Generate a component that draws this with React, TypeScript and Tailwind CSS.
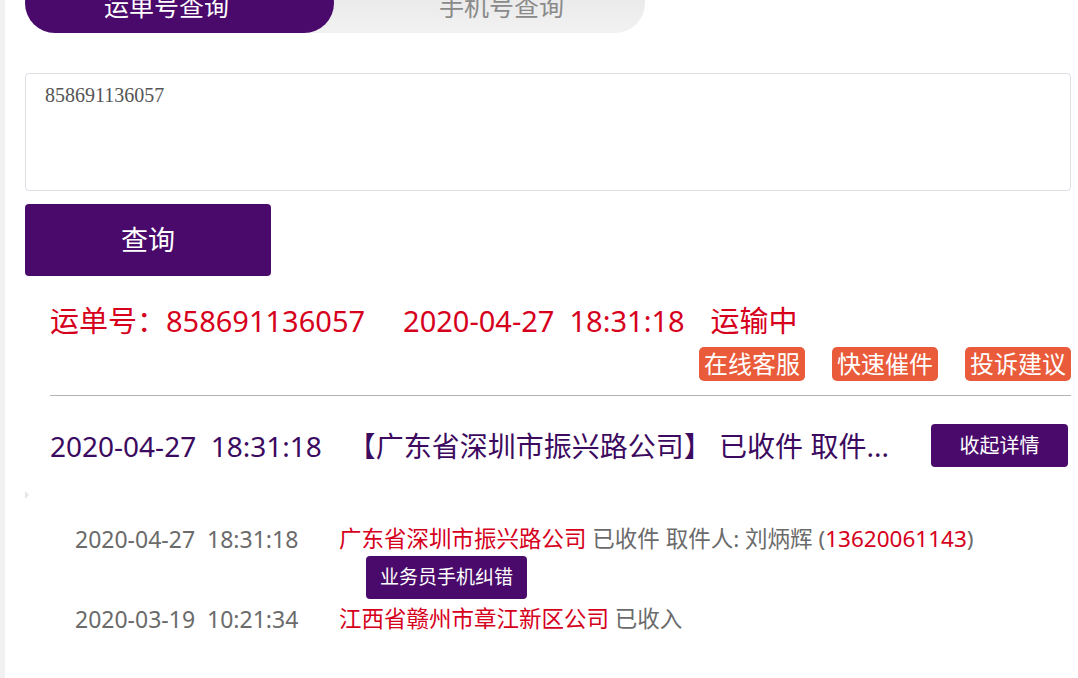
const FONT = "font-['Noto_Sans','Noto_Sans_CJK_SC',sans-serif]"

function ActionButton({ label }: { label: string }) {
  return (
    <button className="h-[34px] px-[5px] rounded-[5px] bg-[#e95b3a] text-white text-[24px] leading-[34px]">
      {label}
    </button>
  )
}

export default function App() {
  return (
    <div className={`min-h-[678px] bg-white border-l-[5px] border-[#f1f1f1] pl-[20px] pr-[7px] overflow-hidden ${FONT}`}>
      {/* tabs */}
      <div className="flex w-[620px] h-[60px] -mt-[27px] rounded-[30px] bg-gradient-to-b from-[#e4e4e4] to-[#f2f2f2]">
        <div className="w-[309px] h-full pt-[8px] pr-[26px] rounded-[30px] bg-[#4a0a6b] text-white text-[25px] flex items-center justify-center">
          运单号查询
        </div>
        <div className="flex-1 pt-[8px] pl-[24px] flex items-center justify-center text-[25px] text-[#8a8a8a]">
          手机号查询
        </div>
      </div>

      {/* input */}
      <div className="mt-[40px] h-[118px] border border-[#dcdfe3] rounded-[4px] px-[19px] pt-[6px]">
        <span className="font-['Liberation_Serif',serif] text-[20px] text-[#555]">858691136057</span>
      </div>

      <button className="mt-[13px] w-[246px] h-[72px] rounded-[4px] bg-[#4a0a6b] text-white text-[27px]">
        查询
      </button>

      {/* result */}
      <div className="pl-[25px] mt-[25px]">
        <div className="text-[#d6001c] text-[29px] leading-[40px] whitespace-pre">
          <span>运单号：858691136057</span>
          <span className="ml-[38px]">2020-04-27  18:31:18</span>
          <span className="ml-[26px]">运输中</span>
        </div>
        <div className="flex justify-end gap-[27px] mt-[6px]">
          <ActionButton label="在线客服" />
          <ActionButton label="快速催件" />
          <ActionButton label="投诉建议" />
        </div>
        <div className="mt-[14px] border-t border-[#b3b3b3]" />

        <div className="flex items-center justify-between mt-[28px]">
          <div className="text-[#3c0a5e] text-[28px] leading-[40px] whitespace-pre">
            <span>2020-04-27  18:31:18</span>
            <span className="ml-[26px]">【广东省深圳市振兴路公司】 已收件 取件...</span>
          </div>
          <button className="w-[137px] h-[43px] mr-[3px] rounded-[4px] bg-[#4a0a6b] text-white text-[20px]">
            收起详情
          </button>
        </div>
      </div>

      <div className="h-[55px] relative">
        <span className="absolute left-0 top-[24px] w-0 h-0 border-y-[4px] border-y-transparent border-l-[4px] border-l-[#e6e6e6]" />
      </div>

      {/* detail list */}
      <div className="pl-[50px] text-[22.5px] text-[#6b6b6b]">
        <div className="flex leading-[34px]">
          <span className="w-[264px] shrink-0 whitespace-pre text-[23px]">2020-04-27  18:31:18</span>
          <div>
            <span className="text-[#d6001c]">广东省深圳市振兴路公司</span> 已收件 取件人: 刘炳辉 (
            <span className="text-[#d6001c]">13620061143</span>)
          </div>
        </div>
        <div className="pl-[291px]">
          <button className="h-[43px] w-[161px] rounded-[4px] bg-[#4a0a6b] text-white text-[19px]">
            业务员手机纠错
          </button>
        </div>
        <div className="flex leading-[34px] mt-[3px]">
          <span className="w-[264px] shrink-0 whitespace-pre text-[23px]">2020-03-19  10:21:34</span>
          <div>
            <span className="text-[#d6001c]">江西省赣州市章江新区公司</span> 已收入
          </div>
        </div>
      </div>
    </div>
  )
}
